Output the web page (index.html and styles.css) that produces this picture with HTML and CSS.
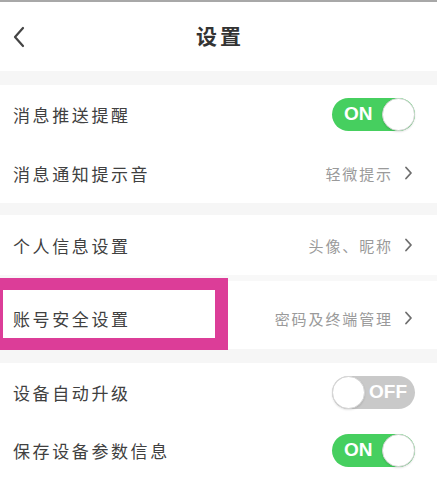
FILE: index.html
```html
<!DOCTYPE html>
<html lang="zh-CN">
<head>
<meta charset="utf-8">
<title>设置</title>
<link rel="stylesheet" href="styles.css">
</head>
<body>
<div class="page">
  <header class="header">
    <svg class="back" width="14" height="22" viewBox="0 0 14 22"><polyline points="11,2 3,11 11,20" fill="none" stroke="#444" stroke-width="2.2" stroke-linecap="round" stroke-linejoin="round"/></svg>
    <h1 class="title">设置</h1>
  </header>
  <div class="gap"></div>
  <section class="group">
    <div class="row r1"><span class="label">消息推送提醒</span><span class="switch on"><span class="sw-text">ON</span><span class="knob"></span></span></div>
    <div class="row r2"><span class="label">消息通知提示音</span><span class="value">轻微提示<svg class="chev" width="9" height="14" viewBox="0 0 9 14"><polyline points="2,1.5 7,7 2,12.5" fill="none" stroke="#6e6e6e" stroke-width="1.8" stroke-linecap="round" stroke-linejoin="round"/></svg></span></div>
  </section>
  <div class="gap g2"></div>
  <section class="group">
    <div class="row r3"><span class="label">个人信息设置</span><span class="value">头像、昵称<svg class="chev" width="9" height="14" viewBox="0 0 9 14"><polyline points="2,1.5 7,7 2,12.5" fill="none" stroke="#6e6e6e" stroke-width="1.8" stroke-linecap="round" stroke-linejoin="round"/></svg></span></div>
    <div class="thin"></div>
    <div class="row r4"><span class="label">账号安全设置</span><span class="value">密码及终端管理<svg class="chev" width="9" height="14" viewBox="0 0 9 14"><polyline points="2,1.5 7,7 2,12.5" fill="none" stroke="#6e6e6e" stroke-width="1.8" stroke-linecap="round" stroke-linejoin="round"/></svg></span><span class="highlight"></span></div>
  </section>
  <div class="gap g3"></div>
  <section class="group">
    <div class="row r5"><span class="label">设备自动升级</span><span class="switch off"><span class="knob"></span><span class="sw-text">OFF</span></span></div>
    <div class="row r6"><span class="label">保存设备参数信息</span><span class="switch on"><span class="sw-text">ON</span><span class="knob"></span></span></div>
  </section>
</div>
</body>
</html>
```
FILE: styles.css
```css
* { box-sizing: border-box; }
html, body { margin: 0; padding: 0; background: #fff; }
body {
  font-family: "Noto Sans CJK SC", "Noto Sans", sans-serif;
  color: #333;
  width: 437px;
  height: 498px;
  overflow: hidden;
}
.header {
  height: 71px;
  border-top: 2px solid #a8a8a8;
  display: flex;
  align-items: center;
  justify-content: center;
  position: relative;
}
.back {
  position: absolute;
  left: 12px;
  top: 24px;
}
.title {
  margin: 0;
  font-size: 21px;
  font-weight: 700;
  letter-spacing: 3px;
  color: #333;
  padding-left: 3px;
  line-height: 1;
  margin-top: -2px;
}
.gap { height: 14px; background: #f6f6f6; }
.g2 { height: 12px; }
.g3 { height: 14px; }
.thin { height: 6px; background: #f8f8f8; }
.group { display: flex; flex-direction: column; }
.row {
  display: flex;
  align-items: center;
  justify-content: space-between;
  padding: 0 23px 0 13px;
  position: relative;
}
.r1 { height: 58px; }
.r2 { height: 60px; }
.r3 { height: 60px; }
.r4 { height: 68px; padding-top: 6px; }
.r5 { height: 58px; }
.r6 { height: 58px; }
.label {
  font-size: 17px;
  letter-spacing: 2.6px;
  color: #404040;
}
.value {
  font-size: 15px;
  letter-spacing: 1.9px;
  color: #9a9a9a;
  display: flex;
  align-items: center;
}
.chev {
  margin-left: 11px;
  margin-right: 1px;
}
.switch {
  width: 83px;
  height: 33px;
  border-radius: 17px;
  display: flex;
  align-items: center;
  font-family: "Liberation Sans", Arial, sans-serif;
  font-weight: 700;
  font-size: 19px;
  color: #fff;
  margin-right: -1px;
}
.switch.on { background: #46cf5f; justify-content: space-between; padding-left: 12px; }
.switch.off { background: #c9c9c9; padding-right: 8px; justify-content: space-between; }
.knob {
  width: 33px;
  height: 33px;
  border-radius: 50%;
  background: #fff;
  border: 1.5px solid #d6d6d6;
  box-shadow: 0 1px 2px rgba(0,0,0,0.12);
}
.highlight {
  position: absolute;
  left: 0;
  top: -3px;
  width: 228px;
  height: 72px;
  border-style: solid;
  border-color: #dc3d98;
  border-width: 12px 13px 12px 3px;
  pointer-events: none;
}
```
